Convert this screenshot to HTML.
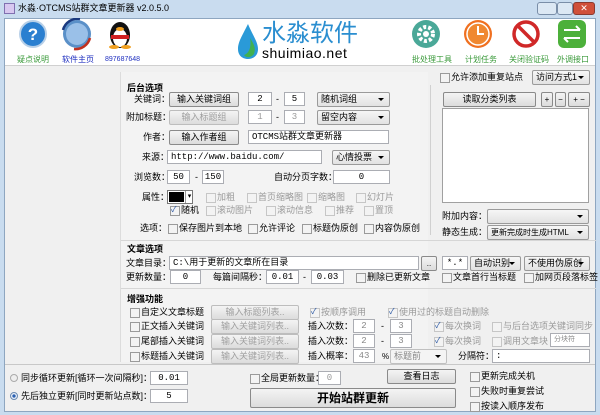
<!DOCTYPE html>
<html><head><meta charset="utf-8"><style>
*{box-sizing:border-box;margin:0;padding:0}
body{width:600px;height:415px;overflow:hidden;background:#c9dcef;font-family:"Liberation Sans","Noto Sans CJK SC",sans-serif;font-size:9px;color:#000;position:relative}
.a{position:absolute;white-space:nowrap;line-height:13px}
.in{position:absolute;background:#fff;border:1px solid #abadb3;height:14px;font-size:9px;line-height:12px;padding-left:3px;font-family:"Liberation Mono","Noto Sans CJK SC",monospace}
.c{text-align:center;padding:0}
.bt{position:absolute;border:1px solid #8a8a8a;border-radius:2px;background:linear-gradient(#f4f4f4,#dcdcdc);height:15px;text-align:center;font-size:9px;line-height:13px}
.dis{color:#a0a0a0;border-color:#bdbdbd}
.sel{position:absolute;border:1px solid #9a9a9a;border-radius:2px;background:linear-gradient(#f6f6f6,#e2e2e2);height:15px;font-size:9px;line-height:13px;padding-left:3px}
.sel:after{content:"";position:absolute;right:5px;top:5px;border:3px solid transparent;border-top:3px solid #000}
.cb{position:absolute;white-space:nowrap;line-height:13px;padding-left:11px}
.cb:before{content:"";position:absolute;left:0;top:2px;width:8px;height:8px;border:1px solid #9a9a9a;background:#f3f3f3}
.ck:after{content:"✓";position:absolute;left:1px;top:-1px;font-size:8px;color:#2050a0}
.g{color:#9a9a9a}
.g:before{border-color:#c6c6c6}
.b{font-weight:bold}
.sep{position:absolute;height:1px;background:#d6d6d6}
</style></head><body>
<div class="a" style="left:4px;top:3px;width:11px;height:11px;background:#d8c8f0;border:1px solid #8070b0"></div>
<div class="a" style="left:18px;top:2px;font-size:9px">水淼·OTCMS站群文章更新器 v2.0.5.0</div>
<div class="a" style="left:537px;top:2px;width:20px;height:13px;border:1px solid #7a8ea8;border-radius:3px;background:#dce8f4"></div>
<div class="a" style="left:557px;top:2px;width:16px;height:13px;border:1px solid #7a8ea8;border-radius:3px;background:#dce8f4"></div>
<div class="a" style="left:573px;top:2px;width:22px;height:13px;border:1px solid #8a3a30;border-radius:3px;background:#d0503a;color:#fff;text-align:center;font-size:9px;line-height:11px">✕</div>
<div class="a" style="left:4px;top:18px;width:592px;height:394px;background:#f0f0f0;border:1px solid #8ea6c0"></div>
<div class="a" style="left:5px;top:19px;width:590px;height:47px;background:#fff;border-bottom:1px solid #d0d0d0"></div>
<svg class="a" style="left:0;top:18px" width="600" height="48">
<circle cx="33" cy="16" r="13" fill="#2a7fd0" stroke="#b8d0e8" stroke-width="2"/><text x="33" y="22" font-size="17" fill="#fff" text-anchor="middle" font-weight="bold" font-family="Liberation Sans">?</text>
<circle cx="77" cy="16" r="14" fill="#5a90c8"/><circle cx="77" cy="16" r="11" fill="#9ac0e8"/><path d="M63 12 A15 15 0 0 1 80 1" stroke="#1a3a80" stroke-width="2.5" fill="none"/><path d="M90 20 A15 15 0 0 1 74 31" stroke="#c03020" stroke-width="2.5" fill="none"/>
<ellipse cx="120" cy="17" rx="10" ry="13" fill="#111"/><ellipse cx="120" cy="20" rx="7" ry="9" fill="#fff"/><ellipse cx="120" cy="11" rx="4" ry="2" fill="#f0a020"/><rect x="111" y="17" width="18" height="4" fill="#d02020"/><ellipse cx="114" cy="29" rx="5" ry="2" fill="#f0a020"/><ellipse cx="126" cy="29" rx="5" ry="2" fill="#f0a020"/>
<path d="M248 6 C242 18 238 24 238 31 C238 38 243 41 248 41 C253 41 258 38 258 31 C258 24 253 18 248 6Z" fill="#2a9ad8"/><path d="M250 20 C254 26 256 30 254 36 C251 40 246 40 244 37 C248 36 252 30 250 20Z" fill="#40b050"/>
<circle cx="426" cy="16" r="14" fill="#4aa898"/><circle cx="426" cy="16" r="7" fill="none" stroke="#fff" stroke-width="4" stroke-dasharray="3 2"/><circle cx="426" cy="16" r="3" fill="#fff"/>
<circle cx="478" cy="16" r="14" fill="#f07020"/><circle cx="478" cy="16" r="11" fill="#f08830" stroke="#fff" stroke-width="1.5"/><path d="M478 8 V16 H484" stroke="#fff" stroke-width="2" fill="none"/>
<circle cx="526" cy="16" r="12" fill="none" stroke="#d02828" stroke-width="3.5"/><path d="M518 8 L534 24" stroke="#d02828" stroke-width="3.5"/>
<rect x="558" y="2" width="28" height="28" rx="6" fill="#4cb03a"/><path d="M564 12 H580 M576 8 L580 12 M580 20 H564 M568 24 L564 20" stroke="#fff" stroke-width="2" fill="none"/>
</svg>
<div class="a" style="left:262px;top:20px;font-size:24px;line-height:28px;color:#2a8ed0">水淼软件</div>
<div class="a" style="left:262px;top:46px;font-size:14px;line-height:15px;letter-spacing:0.5px">shuimiao.net</div>
<div class="a" style="left:17px;top:53px;font-size:8px;color:#3a9a3a">疑点说明</div>
<div class="a" style="left:62px;top:53px;font-size:8px;color:#2030c0">软件主页</div>
<div class="a" style="left:105px;top:53px;font-size:7px;color:#2030c0">897687648</div>
<div class="a" style="left:412px;top:53px;font-size:8px;color:#3a9a3a">批处理工具</div>
<div class="a" style="left:465px;top:53px;font-size:8px;color:#3a9a3a">计划任务</div>
<div class="a" style="left:509px;top:53px;font-size:8px;color:#3a9a3a">关闭验证码</div>
<div class="a" style="left:557px;top:53px;font-size:8px;color:#3a9a3a">外调接口</div>
<div class="a" style="left:120px;top:72px;width:1px;height:290px;background:#dcdcdc"></div>
<div class="a" style="left:121px;top:72px;width:307px;height:290px;background:#f3f3f3"></div>
<div class="a" style="left:430px;top:85px;width:1px;height:150px;background:#d0d0d0"></div>
<div class="sep" style="left:121px;top:240px;width:475px"></div>
<div class="sep" style="left:121px;top:288px;width:475px"></div>
<div class="sep" style="left:5px;top:364px;width:590px;background:#c8c8c8"></div>
<div class="cb" style="left:440px;top:71px">允许添加重复站点</div>
<div class="sel" style="left:532px;top:70px;width:58px">访问方式1</div>
<div class="a b" style="left:127px;top:82px">后台选项</div>
<div class="a" style="left:134px;top:93px">关键词：</div>
<div class="bt" style="left:169px;top:92px;width:70px">输入关键词组</div>
<div class="in c" style="left:248px;top:92px;width:24px">2</div><div class="a" style="left:276px;top:93px">-</div><div class="in c" style="left:284px;top:92px;width:21px">5</div>
<div class="sel" style="left:317px;top:92px;width:73px">随机词组</div>
<div class="a" style="left:126px;top:111px">附加标题：</div>
<div class="bt dis" style="left:169px;top:110px;width:70px">输入标题组</div>
<div class="in c" style="left:248px;top:110px;width:24px;color:#999">1</div><div class="a" style="left:276px;top:111px">-</div><div class="in c" style="left:284px;top:110px;width:21px;color:#999">3</div>
<div class="sel" style="left:317px;top:110px;width:73px">留空内容</div>
<div class="a" style="left:143px;top:131px">作者：</div>
<div class="bt" style="left:169px;top:130px;width:70px">输入作者组</div>
<div class="in" style="left:248px;top:130px;width:141px">OTCMS站群文章更新器</div>
<div class="a" style="left:142px;top:151px">来源：</div>
<div class="in" style="left:167px;top:150px;width:155px">http://www.baidu.com/</div>
<div class="sel" style="left:332px;top:150px;width:58px">心情投票</div>
<div class="a" style="left:134px;top:171px">浏览数：</div>
<div class="in c" style="left:167px;top:170px;width:23px">50</div><div class="a" style="left:195px;top:171px">-</div><div class="in c" style="left:202px;top:170px;width:22px">150</div>
<div class="a" style="left:274px;top:171px">自动分页字数：</div>
<div class="in c" style="left:333px;top:170px;width:57px">0</div>
<div class="a" style="left:142px;top:191px">属性：</div>
<div class="a" style="left:167px;top:190px;width:26px;height:14px;border:1px solid #777;background:#fff"><div style="position:absolute;left:1px;top:1px;width:15px;height:10px;background:#000"></div><div style="position:absolute;left:17px;top:0;width:8px;height:12px;border-left:1px solid #999;font-size:7px;text-align:center;line-height:11px">▾</div></div>
<div class="cb g" style="left:206px;top:191px">加粗</div><div class="cb g" style="left:247px;top:191px">首页缩略图</div><div class="cb g" style="left:307px;top:191px">缩略图</div><div class="cb g" style="left:356px;top:191px">幻灯片</div>
<div class="cb ck" style="left:170px;top:204px">随机</div><div class="cb g" style="left:206px;top:204px">滚动图片</div><div class="cb g" style="left:266px;top:204px">滚动信息</div><div class="cb g" style="left:325px;top:204px">推荐</div><div class="cb g" style="left:364px;top:204px">置顶</div>
<div class="a" style="left:140px;top:222px">选项：</div>
<div class="cb" style="left:168px;top:222px">保存图片到本地</div><div class="cb" style="left:248px;top:222px">允许评论</div><div class="cb" style="left:302px;top:222px">标题伪原创</div><div class="cb" style="left:364px;top:222px">内容伪原创</div>
<div class="bt" style="left:443px;top:92px;width:93px">读取分类列表</div>
<div class="bt" style="left:541px;top:92px;width:12px;font-size:8px">+</div><div class="bt" style="left:555px;top:92px;width:11px;font-size:8px">−</div><div class="bt" style="left:568px;top:92px;width:22px;font-size:8px">+ −</div>
<div class="a" style="left:442px;top:108px;width:147px;height:95px;background:#fff;border:1px solid #a0a0a0"></div>
<div class="a" style="left:442px;top:210px">附加内容：</div><div class="sel" style="left:487px;top:209px;width:102px"></div>
<div class="a" style="left:442px;top:226px">静态生成：</div><div class="sel" style="left:487px;top:225px;width:102px;font-size:8px">更新完成时生成HTML</div>
<div class="a b" style="left:127px;top:243px">文章选项</div>
<div class="a" style="left:126px;top:257px">文章目录：</div>
<div class="in" style="left:169px;top:256px;width:250px">C:\用于更新的文章所在目录</div>
<div class="bt" style="left:421px;top:256px;width:16px;font-size:8px">..</div>
<div class="in c" style="left:442px;top:256px;width:26px">*.*</div>
<div class="sel" style="left:470px;top:256px;width:51px">自动识别</div>
<div class="sel" style="left:524px;top:256px;width:66px">不使用伪原创</div>
<div class="a" style="left:126px;top:271px">更新数量：</div>
<div class="in c" style="left:170px;top:270px;width:31px">0</div>
<div class="a" style="left:213px;top:271px">每篇间隔秒：</div>
<div class="in c" style="left:266px;top:270px;width:33px">0.01</div><div class="a" style="left:303px;top:271px">-</div><div class="in c" style="left:311px;top:270px;width:33px">0.03</div>
<div class="cb" style="left:356px;top:271px">删除已更新文章</div><div class="cb" style="left:442px;top:271px">文章首行当标题</div><div class="cb" style="left:524px;top:271px">加网页段落标签</div>
<div class="a b" style="left:127px;top:293px">增强功能</div>
<div class="cb" style="left:130px;top:306px">自定义文章标题</div><div class="bt dis" style="left:211px;top:305px;width:88px">输入标题列表..</div>
<div class="cb ck g" style="left:310px;top:306px">按顺序调用</div><div class="cb ck g" style="left:388px;top:306px">使用过的标题自动删除</div>
<div class="cb" style="left:130px;top:320px">正文插入关键词</div><div class="bt dis" style="left:211px;top:319px;width:88px">输入关键词列表..</div>
<div class="a" style="left:308px;top:320px">插入次数：</div><div class="in c" style="left:353px;top:319px;width:22px;color:#888">2</div><div class="a" style="left:381px;top:320px">-</div><div class="in c" style="left:390px;top:319px;width:22px;color:#888">3</div>
<div class="cb ck g" style="left:434px;top:320px">每次换词</div><div class="cb g" style="left:492px;top:320px">与后台选项关键词同步</div>
<div class="cb" style="left:130px;top:335px">尾部插入关键词</div><div class="bt dis" style="left:211px;top:334px;width:88px">输入关键词列表..</div>
<div class="a" style="left:308px;top:335px">插入次数：</div><div class="in c" style="left:353px;top:334px;width:22px;color:#888">2</div><div class="a" style="left:381px;top:335px">-</div><div class="in c" style="left:390px;top:334px;width:22px;color:#888">3</div>
<div class="cb ck g" style="left:434px;top:335px">每次换词</div><div class="cb g" style="left:492px;top:335px">调用文章块</div><div class="in" style="left:550px;top:333px;width:40px;font-size:7px;color:#888">分块符</div>
<div class="cb" style="left:130px;top:350px">标题插入关键词</div><div class="bt dis" style="left:211px;top:349px;width:88px">输入关键词列表..</div>
<div class="a" style="left:308px;top:350px">插入概率：</div><div class="in c" style="left:353px;top:349px;width:22px;color:#888">43</div><div class="a" style="left:382px;top:350px;font-size:8px">%</div>
<div class="sel" style="left:390px;top:349px;width:57px;color:#888;background:#f4f4f4;border-color:#c0c0c0">标题前</div>
<div class="a" style="left:458px;top:350px">分隔符：</div><div class="in" style="left:492px;top:349px;width:98px">:</div>
<div class="a" style="left:10px;top:372px"><span style="display:inline-block;width:8px;height:8px;border:1px solid #aaa;border-radius:50%;background:#eee;margin-right:3px;vertical-align:-1px"></span>同步循环更新[循环一次间隔秒]：</div>
<div class="in c" style="left:150px;top:371px;width:38px">0.01</div>
<div class="a" style="left:10px;top:390px"><span style="display:inline-block;width:8px;height:8px;border:1px solid #6a8ab0;border-radius:50%;background:radial-gradient(#2a60b0 35%,#e8eef8 45%);margin-right:3px;vertical-align:-1px"></span>先后独立更新[同时更新站点数]：</div>
<div class="in c" style="left:150px;top:389px;width:38px">5</div>
<div class="cb" style="left:250px;top:372px">全局更新数量：</div><div class="in c" style="left:318px;top:371px;width:23px;color:#999">0</div>
<div class="bt" style="left:387px;top:369px;width:69px">查看日志</div>
<div class="bt" style="left:250px;top:388px;width:206px;height:20px;font-size:12px;line-height:18px;font-weight:bold">开始站群更新</div>
<div class="cb" style="left:470px;top:370px">更新完成关机</div>
<div class="cb" style="left:470px;top:385px">失败时重复尝试</div>
<div class="cb" style="left:470px;top:400px">按读入顺序发布</div>
</body></html>
